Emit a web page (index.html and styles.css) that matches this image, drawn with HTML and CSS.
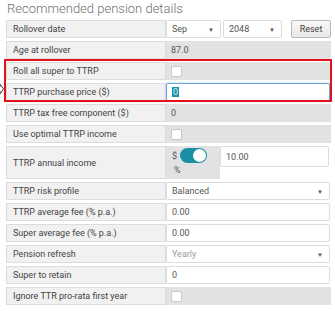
FILE: index.html
```html
<!DOCTYPE html>
<html lang="en">
<head>
    <meta charset="UTF-8">
    <title>Recommended pension details</title>
    <link rel="stylesheet" href="styles.css">
</head>
<body>
    <div class="panel">
        <h3 class="title">Recommended pension details</h3>

        <div class="rows">
            <div class="row">
                <div class="label">Rollover date</div>
                <div class="value date">
                    <div class="select month">Sep <span class="arrow">&#9660;</span></div>
                    <div class="select year">2048 <span class="arrow">&#9660;</span></div>
                    <button class="reset">Reset</button>
                </div>
            </div>

            <div class="row">
                <div class="label">Age at rollover</div>
                <div class="value grey">87.0</div>
            </div>

            <div class="row">
                <div class="label">Roll all super to TTRP</div>
                <div class="value grey"><span class="check"></span></div>
            </div>

            <div class="row">
                <div class="label">TTRP purchase price ($)</div>
                <div class="value"><div class="input focused"><span class="sel">0</span></div></div>
            </div>

            <div class="row">
                <div class="label">TTRP tax free component ($)</div>
                <div class="value grey">0</div>
            </div>

            <div class="row">
                <div class="label">Use optimal TTRP income</div>
                <div class="value grey"><span class="check"></span></div>
            </div>

            <div class="row tall">
                <div class="label">TTRP annual income</div>
                <div class="value income">
                    <div class="toggle-cell">
                        <div class="toggle-line">
                            <span>$</span>
                            <span class="toggle"><span class="knob"></span></span>
                        </div>
                        <span class="pct">%</span>
                    </div>
                    <div class="input amount">10.00</div>
                </div>
            </div>

            <div class="row">
                <div class="label">TTRP risk profile</div>
                <div class="value"><div class="select wide">Balanced <span class="arrow">&#9660;</span></div></div>
            </div>

            <div class="row">
                <div class="label">TTRP average fee (% p.a.)</div>
                <div class="value"><div class="input">0.00</div></div>
            </div>

            <div class="row">
                <div class="label">Super average fee (% p.a.)</div>
                <div class="value"><div class="input">0.00</div></div>
            </div>

            <div class="row">
                <div class="label">Pension refresh</div>
                <div class="value"><div class="select wide muted">Yearly <span class="arrow">&#9660;</span></div></div>
            </div>

            <div class="row">
                <div class="label">Super to retain</div>
                <div class="value"><div class="input">0</div></div>
            </div>

            <div class="row">
                <div class="label">Ignore TTR pro-rata first year</div>
                <div class="value grey"><span class="check"></span></div>
            </div>
        </div>

        <!-- annotation box drawn over the two rows -->
        <div class="highlight"></div>
        <svg class="pointer" width="8" height="12" viewBox="0 0 8 12">
            <path d="M1 4 H4 V1 L7.5 6 L4 11 V8 H1 Z" fill="#fff" stroke="#444" stroke-width="1"/>
        </svg>
    </div>
</body>
</html>
```

FILE: styles.css
```css
body {
    margin: 0;
    background: #fff;
    font-family: Roboto, "Liberation Sans", sans-serif;
    font-size: 9px;
    color: #444;
}
.panel {
    position: relative;
    padding: 0 4px 0 6px;
}
.title {
    margin: 0;
    height: 20px;
    padding-left: 1px;
    font-size: 13px;
    font-weight: 300;
    line-height: 18px;
    color: #6f6f6f;
}
.rows {
    display: flex;
    flex-direction: column;
    gap: 3px;
}
.row {
    display: flex;
    height: 18px;
}
.row.tall {
    height: 33px;
}
.label {
    box-sizing: border-box;
    width: 160px;
    padding-left: 6px;
    display: flex;
    align-items: center;
    background: #f1f1f1;
    border: 1px solid #dcdcdc;
    color: #444;
}
.value {
    width: 165px;
    display: flex;
    align-items: center;
    color: #555;
}
.value.grey {
    background: #e2e2e2;
    padding-left: 5px;
    box-sizing: border-box;
}
.check {
    width: 9px;
    height: 9px;
    background: #fff;
    border: 1px solid #c8c8c8;
    border-radius: 2px;
}
.date {
    gap: 2px;
}
.select {
    box-sizing: border-box;
    height: 18px;
    display: flex;
    align-items: center;
    justify-content: space-between;
    padding: 0 6px 0 5px;
    background: #fff;
    border: 1px solid #dcdcdc;
    border-radius: 2px;
}
.arrow {
    font-size: 6px;
    color: #555;
}
.month {
    width: 55px;
}
.year {
    width: 59px;
}
.wide {
    width: 164px;
}
.muted {
    color: #9a9a9a;
}
.reset {
    margin-left: 7px;
    width: 40px;
    height: 18px;
    padding: 0;
    font-family: inherit;
    font-size: 9px;
    color: #444;
    background: linear-gradient(#f8f8f8, #e8e8e8);
    border: 1px solid #b9b9b9;
    border-radius: 2px;
}
.input {
    box-sizing: border-box;
    width: 164px;
    height: 18px;
    display: flex;
    align-items: center;
    padding-left: 5px;
    background: #fff;
    border: 1px solid #dcdcdc;
    border-radius: 2px;
}
.input.focused {
    border-color: #6ea3d8;
    box-shadow: 0 0 2px #9cc3ea;
}
.sel {
    background: #1d8fa6;
    color: #d8f0ff;
    padding: 0 1px;
    line-height: 10px;
}
.income {
    align-items: flex-start;
    height: 33px;
}
.toggle-cell {
    box-sizing: border-box;
    width: 54px;
    height: 33px;
    background: #e2e2e2;
    padding: 2px 0 0 6px;
    display: flex;
    flex-direction: column;
    gap: 2px;
}
.toggle-line {
    display: flex;
    align-items: center;
    gap: 3px;
}
.toggle {
    position: relative;
    width: 27px;
    height: 15px;
    background: #1a8fa3;
    border-radius: 8px;
}
.knob {
    position: absolute;
    right: 1px;
    top: 1px;
    width: 13px;
    height: 13px;
    background: #fff;
    border-radius: 50%;
}
.pct {
    padding-left: 2px;
}
.amount {
    width: 109px;
    height: 21px;
}
.highlight {
    position: absolute;
    left: 4px;
    top: 59px;
    width: 324px;
    height: 39px;
    border: 2px solid #e3111b;
}
.pointer {
    position: absolute;
    left: -4px;
    top: 83px;
}
```
